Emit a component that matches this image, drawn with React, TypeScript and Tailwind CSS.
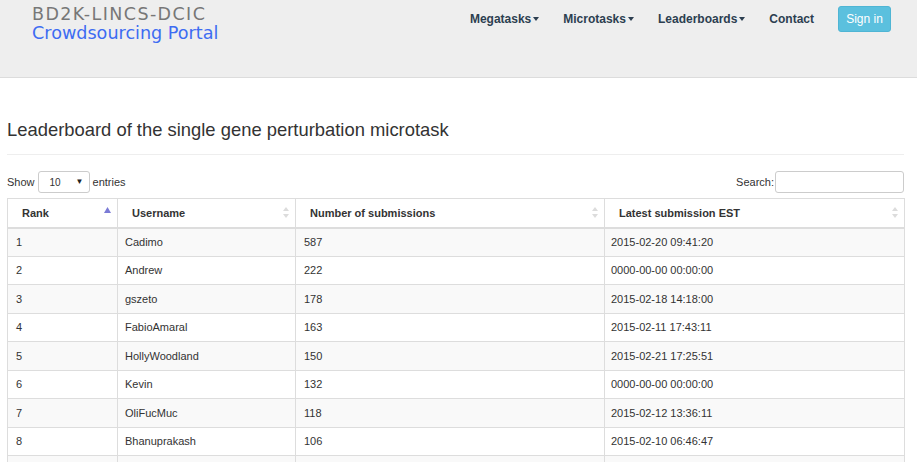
import React from "react";

const rows = [
  { rank: 1, user: "Cadimo", count: 587, latest: "2015-02-20 09:41:20" },
  { rank: 2, user: "Andrew", count: 222, latest: "0000-00-00 00:00:00" },
  { rank: 3, user: "gszeto", count: 178, latest: "2015-02-18 14:18:00" },
  { rank: 4, user: "FabioAmaral", count: 163, latest: "2015-02-11 17:43:11" },
  { rank: 5, user: "HollyWoodland", count: 150, latest: "2015-02-21 17:25:51" },
  { rank: 6, user: "Kevin", count: 132, latest: "0000-00-00 00:00:00" },
  { rank: 7, user: "OliFucMuc", count: 118, latest: "2015-02-12 13:36:11" },
  { rank: 8, user: "Bhanuprakash", count: 106, latest: "2015-02-10 06:46:47" },
  { rank: 9, user: "", count: "", latest: "" },
];

function Caret() {
  return (
    <span className="ml-[2px] inline-block h-0 w-0 border-x-[3px] border-t-[4px] border-x-transparent border-t-[#2c3e50] align-middle" />
  );
}

function SortBoth() {
  return (
    <svg width="6" height="11" viewBox="0 0 6 11" className="shrink-0">
      <path d="M3 0 L6 4 L0 4 Z" fill="#dcdcdc" />
      <path d="M3 11 L6 7 L0 7 Z" fill="#dcdcdc" />
    </svg>
  );
}

function SortAsc() {
  return (
    <svg width="7" height="6" viewBox="0 0 7 6" className="shrink-0 -mt-[6px]">
      <path d="M3.5 0 L7 6 L0 6 Z" fill="#7b7bd6" />
    </svg>
  );
}

const cols = ["w-[110px]", "w-[178px]", "w-[309px]", "w-[300px]"];

export default function App() {
  return (
    <div className="min-h-[462px] bg-white font-['Liberation_Sans',Arial,sans-serif] text-[#333]">
      <header className="flex h-[78px] items-start justify-between border-b border-[#dcdcdc] bg-[#eeeeee] pl-[32px] pr-[26px]">
        <div className="pt-[5px] font-['DejaVu_Sans',sans-serif] leading-[18px]">
          <div className="text-[17.5px] tracking-[1.4px] text-[#777777]">BD2K-LINCS-DCIC</div>
          <div className="mt-[1px] text-[17.6px] text-[#3d6cf2]">Crowdsourcing Portal</div>
        </div>
        <nav className="flex items-center pt-[6px] text-[12px] font-bold text-[#2c3e50]">
          <a className="flex h-[26px] items-center">
            Megatasks
            <Caret />
          </a>
          <a className="ml-[24px] flex h-[26px] items-center">
            Microtasks
            <Caret />
          </a>
          <a className="ml-[24px] flex h-[26px] items-center">
            Leaderboards
            <Caret />
          </a>
          <a className="ml-[24px] flex h-[26px] items-center">Contact</a>
          <button className="ml-[24px] h-[26px] w-[53px] rounded-[3px] border border-[#4fb5d4] bg-[#5bc0de] text-[12px] font-normal text-white">
            Sign in
          </button>
        </nav>
      </header>

      <main className="px-[7px] pr-[13px]">
        <h3 className="pt-[42px] text-[18.4px] leading-[20px] text-[#333]">
          Leaderboard of the single gene perturbation microtask
        </h3>
        <hr className="mt-[14px] border-t border-[#eeeeee]" />

        <div className="mt-[16px] flex items-center justify-between text-[11px]">
          <div className="flex items-center">
            <span>Show</span>
            <div className="ml-[3px] flex h-[22px] w-[52px] items-center justify-between rounded-[3px] border border-[#cccccc] bg-white pl-[11px] pr-[5px] text-[10px]">
              <span>10</span>
              <span className="text-[8px] text-[#222]">▼</span>
            </div>
            <span className="ml-[3px]">entries</span>
          </div>
          <div className="flex items-center">
            <span>Search:</span>
            <input className="ml-[1px] h-[22px] w-[129px] rounded-[3px] border border-[#cccccc] bg-white outline-none" />
          </div>
        </div>

        <table className="mt-[5px] w-[897px] table-fixed border-collapse border border-[#dddddd] text-[11px]">
          <thead>
            <tr className="h-[29px] border-b-2 border-[#dddddd] text-left font-bold">
              {["Rank", "Username", "Number of submissions", "Latest submission EST"].map((h, i) => (
                <th key={h} className={`${cols[i]} border-x border-[#dddddd] pl-[14px] pr-[6px]`}>
                  <div className="flex items-center justify-between">
                    <span>{h}</span>
                    {i === 0 ? <SortAsc /> : <SortBoth />}
                  </div>
                </th>
              ))}
            </tr>
          </thead>
          <tbody>
            {rows.map((r, i) => (
              <tr key={r.rank} className={`h-[28.5px] border-t border-[#dddddd] ${i % 2 === 0 ? "bg-[#f9f9f9]" : "bg-white"}`}>
                <td className="border-x border-[#dddddd] px-[8px]">{r.user ? r.rank : ""}</td>
                <td className="border-x border-[#dddddd] px-[7px]">{r.user}</td>
                <td className="border-x border-[#dddddd] px-[8px]">{r.count}</td>
                <td className="border-x border-[#dddddd] px-[6px]">{r.latest}</td>
              </tr>
            ))}
          </tbody>
        </table>
      </main>
    </div>
  );
}
